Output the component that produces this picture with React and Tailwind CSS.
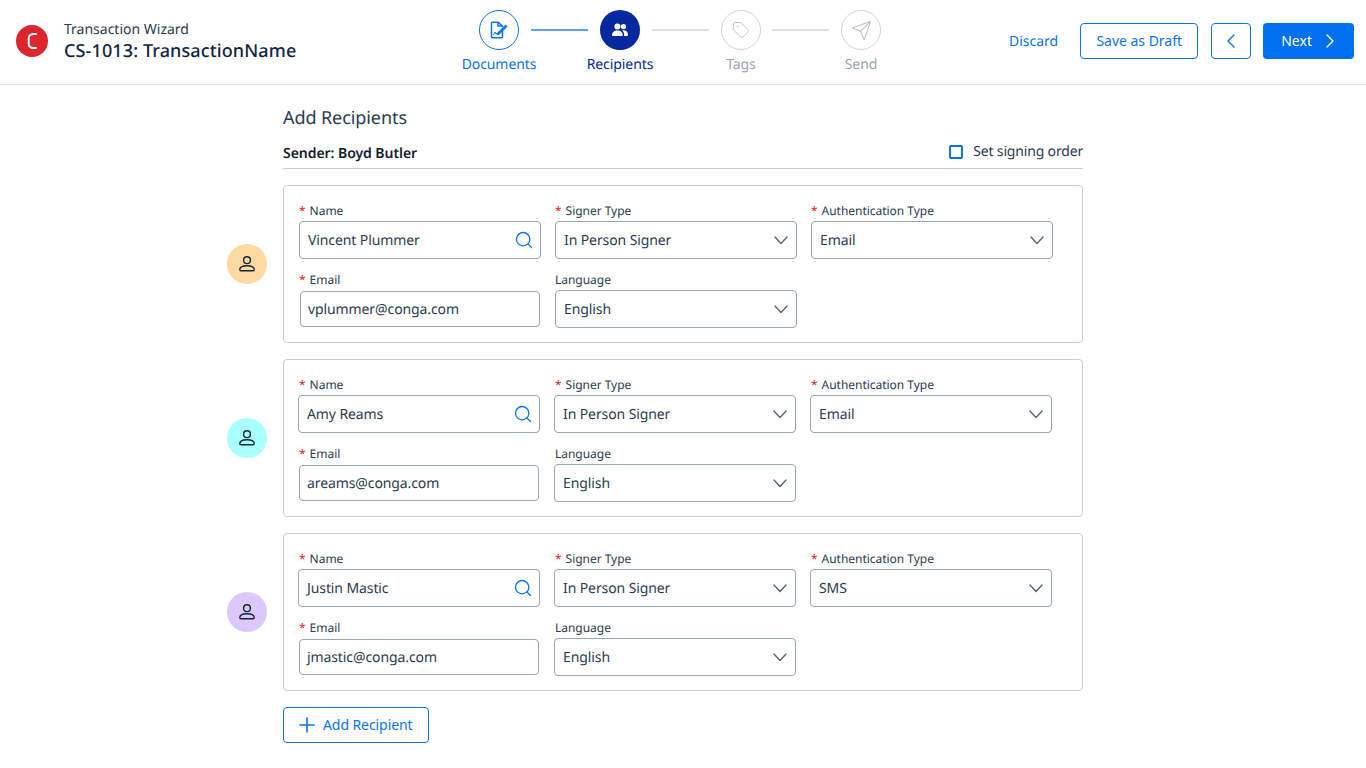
import React from 'react'
import { Plus, Search, Send, Tag } from 'lucide-react'

const steps = [
  { label: 'Documents', state: 'done' },
  { label: 'Recipients', state: 'active' },
  { label: 'Tags', state: 'todo' },
  { label: 'Send', state: 'todo' },
]

const recipients = [
  { name: 'Vincent Plummer', email: 'vplummer@conga.com', auth: 'Email', avatar: 'bg-[#ffd9a0]', pad: 'pl-[15px]', labelPad: '' },
  { name: 'Amy Reams', email: 'areams@conga.com', auth: 'Email', avatar: 'bg-[#aaffff]', pad: 'pl-[14px]', labelPad: 'pl-px' },
  { name: 'Justin Mastic', email: 'jmastic@conga.com', auth: 'SMS', avatar: 'bg-[#dcc8fa]', pad: 'pl-[14px]', labelPad: 'pl-px' },
]

const DocIcon = () => (
  <svg width="20" height="20" viewBox="0 0 20 20" fill="none" stroke="currentColor" strokeWidth="1.5" strokeLinecap="round" strokeLinejoin="round">
    <path d="M13.5 9.5V17a.8.8 0 0 1-.8.8H3.3a.8.8 0 0 1-.8-.8V3a.8.8 0 0 1 .8-.8h6l4 3.8" />
    <path d="M9 2.5V6h4" />
    <path d="M9 12.5l7.5-7.5 1.5 1.5-7.5 7.500-2 .5z" fill="currentColor" strokeWidth="1" />
    <path d="M4.500 14.500l1.500-2.500 1 2 1-1 1 1.500" strokeWidth="1" />
  </svg>
)

const UsersIcon = () => (
  <svg width="18" height="18" viewBox="0 0 18 18" fill="currentColor">
    <circle cx="6.400" cy="5.400" r="3" />
    <circle cx="12.400" cy="5.600" r="2.700" />
    <path d="M1 14.200c0-2.800 2.200-4.600 5.400-4.600s5.400 1.800 5.400 4.600c0 .5-.3.8-.8.8H1.800c-.5 0-.8-.3-.8-.8z" />
    <path d="M12.200 9.200c2.900 0 4.800 1.700 4.800 4.300 0 .9-.4 1.500-1.200 1.500h-2.900c.3-.3.3-.6.3-1 0-1.800-.7-3.400-2-4.500.3-.2.600-.3 1-.3z" />
  </svg>
)

const UserIcon = () => (
  <svg width="18" height="18" viewBox="0 0 18 18" fill="none" stroke="#10263f" strokeWidth="1.4">
    <circle cx="9" cy="5.200" r="3.400" />
    <path d="M1.800 14.600c0-2.500 2.400-3.900 7.200-3.900s7.200 1.400 7.200 3.900c0 .8-.4 1.200-1.200 1.200H3c-.8 0-1.200-.4-1.200-1.200z" />
  </svg>
)

const Logo = () => (
  <svg width="32" height="32" viewBox="0 0 32 32">
    <circle cx="16" cy="16" r="16" fill="#dc252d" />
    <path d="M20 9h-2.500c-3 0-4.800 1.800-4.800 4.800v4.400c0 3 1.800 4.800 4.800 4.800H20" fill="none" stroke="#fff" strokeWidth="2" strokeLinecap="round" />
  </svg>
)

const Chevron = ({ d, width, height, className }) => (
  <svg width={width} height={height} viewBox={`0 0 ${width} ${height}`} fill="none" stroke="currentColor" strokeWidth="1.400" strokeLinecap="round" strokeLinejoin="round" className={className}>
    <path d={d} />
  </svg>
)

const Step = ({ step, children }) => {
  const circle = {
    done: 'border border-[#0a74ee] text-[#0a74ee] bg-white',
    active: 'bg-[#0527a0] text-white',
    todo: 'border border-[#cfd5dc] text-[#b9c2cc] bg-white',
  }[step.state]
  const text = {
    done: 'text-[#0a74ee]',
    active: 'text-[#0527a0]',
    todo: 'text-[#99a4b1]',
  }[step.state]
  return (
    <div className="flex w-10 flex-col items-center">
      <div className={`flex h-10 w-10 items-center justify-center rounded-full ${circle}`}>{children}</div>
      <span className={`mt-[5px] whitespace-nowrap text-sm leading-5 tracking-[-0.08px] ${text}`}>{step.label}</span>
    </div>
  )
}

const Line = ({ done, className }) => (
  <div className={`mt-[19px] h-0.5 w-[57px] ${done ? 'bg-[#5ba3f3]' : 'bg-[#dde2e8]'} ${className}`} />
)

const Label = ({ text, required, className }) => (
  <div className={`flex h-[19px] items-start text-xs leading-[18px] tracking-[-0.03px] text-[#2a3c50] ${className}`}>
    {required && <span className="mr-1 text-[#e5202b]">*</span>}
    {text}
  </div>
)

const Select = ({ label, required, value, labelPad }) => (
  <div className="w-[242px]">
    <Label text={label} required={required} className={labelPad} />
    <div className="flex h-[38px] items-center justify-between rounded-[4px] border border-[#98a4b2] pl-2 pr-2 pt-0.5 text-sm tracking-[-0.1px] text-[#2a3c50]">
      <span>{value}</span>
      <Chevron d="M1 1l6 6.500 6-6.500" width={14} height={9} className="-mt-0.5 text-[#55677b]" />
    </div>
  </div>
)

const RecipientCard = ({ r }) => (
  <div className="flex items-center gap-4">
    <div className={`flex h-10 w-10 items-center justify-center rounded-full ${r.avatar}`}>
      <UserIcon />
    </div>
    <div className={`h-[158px] w-[800px] rounded-[4px] border border-[#c8ced6] pt-4 ${r.pad}`}>
      <div className="grid grid-cols-[242px_242px_242px] gap-x-[14px] gap-y-3">
        <div>
          <Label text="Name" required className={r.labelPad} />
          <div className="flex h-[38px] items-center justify-between rounded-[4px] border border-[#98a4b2] pl-2 pr-1.5 pt-0.5 text-sm tracking-[-0.1px] text-[#2a3c50]">
            <span>{r.name}</span>
            <Search size={20} strokeWidth={1.6} className="-mt-0.5 text-[#0a74ee]" />
          </div>
        </div>
        <Select label="Signer Type" required value="In Person Signer" labelPad={r.labelPad} />
        <Select label="Authentication Type" required value={r.auth} labelPad={r.labelPad} />
        <div>
          <Label text="Email" required className={r.labelPad} />
          <div className="mx-px my-px flex h-9 items-center rounded-[4px] border border-[#98a4b2] pl-[7px] pt-0.5 text-sm tracking-[-0.1px] text-[#2a3c50]">
            {r.email}
          </div>
        </div>
        <Select label="Language" value="English" labelPad={r.labelPad} />
      </div>
    </div>
  </div>
)

export default function App() {
  return (
    <div className="min-h-screen bg-white font-['Noto_Sans',sans-serif] text-[#2a3c50] [text-rendering:geometricPrecision]">
      <header className="flex h-[85px] border-b border-[#dfe2e6]">
        <div className="flex w-[479px] items-center pb-[2px] pl-4">
          <Logo />
          <div className="ml-4">
            <div className="text-sm leading-5 text-[#2a3c50]">Transaction Wizard</div>
            <div className="text-lg leading-[22px] font-medium tracking-[0.12px] text-[#10263f]">CS-1013: TransactionName</div>
          </div>
        </div>
        <div className="flex w-[402px] items-start pt-[10px]">
          <Step step={steps[0]}><DocIcon /></Step>
          <Line done className="mx-3" />
          <Step step={steps[1]}><UsersIcon /></Step>
          <Line className="mx-3" />
          <Step step={steps[2]}><Tag size={18} strokeWidth={1.3} /></Step>
          <Line className="ml-[11px] mr-3" />
          <Step step={steps[3]}><Send size={21} strokeWidth={1.2} /></Step>
        </div>
        <div className="flex flex-1 items-start pt-[23px] pl-[128px] text-sm text-[#0a74ee]">
          <span className="mr-[22px] leading-[38px]">Discard</span>
          <button className="h-9 w-[118px] rounded-[4px] border border-[#0a74ee] tracking-[-0.02px]">Save as Draft</button>
          <button className="ml-[13px] flex h-9 w-10 items-center justify-center rounded-[4px] border border-[#0a74ee]">
            <Chevron d="M8 1L2 7l6 6" width={10} height={14} />
          </button>
          <button className="ml-3 flex h-9 w-[91px] items-center gap-[13px] rounded-[4px] bg-[#0070ee] pl-[18px] text-white">
            Next
            <Chevron d="M2 1l6 6-6 6" width={10} height={14} />
          </button>
        </div>
      </header>
      <main className="ml-[227px] w-[856px] pt-5">
        <div className="ml-14">
          <h1 className="text-lg leading-[26px] tracking-[-0.08px] text-[#2a3c50]">Add Recipients</h1>
          <div className="mt-2 box-content flex h-6 items-start justify-between border-b border-[#c8ced6] pb-[5px]">
            <span className="pt-[5px] text-sm font-semibold tracking-[-0.05px] text-[#111d2b]">Sender: Boyd Butler</span>
            <label className="flex items-center gap-[10px] text-sm leading-[26px] tracking-[-0.17px] text-[#2a3c50]">
              <span className="h-[14px] w-[14px] rounded-[2px] border-2 border-[#0a74ee] bg-white" />
              Set signing order
            </label>
          </div>
        </div>
        <div className="mt-4 flex flex-col gap-4">
          {recipients.map((r) => (
            <RecipientCard key={r.email} r={r} />
          ))}
        </div>
        <button className="mt-4 ml-14 flex h-9 w-[146px] items-center gap-1 rounded-[4px] border border-[#0a74ee] pl-[11px] text-sm tracking-[-0.08px] text-[#0a74ee]">
          <Plus size={24} strokeWidth={1.6} />
          Add Recipient
        </button>
      </main>
    </div>
  )
}
